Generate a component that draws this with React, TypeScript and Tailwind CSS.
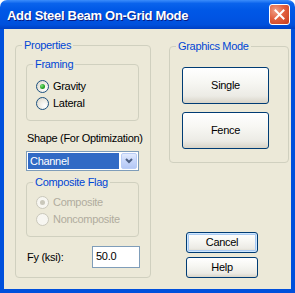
import React from 'react';

const font = "font-['Liberation_Sans',Arial,sans-serif]";

const Radio: React.FC<{ label: string; checked?: boolean; disabled?: boolean }> = ({ label, checked, disabled }) => (
  <div className="flex items-center h-[17px]">
    <span
      className={`relative w-[13px] h-[13px] rounded-full border flex items-center justify-center shrink-0 ${
        disabled
          ? 'border-[#cac8bb] bg-[#f7f6f1]'
          : 'border-[#1c5180] bg-[radial-gradient(circle_at_70%_70%,#ffffff_0%,#ece9e0_55%,#d4d2c6_100%)]'
      }`}
    >
      {checked && (
        <span
          className={`w-[5px] h-[5px] rounded-full ${
            disabled ? 'bg-[#cac8bb]' : 'bg-[radial-gradient(circle_at_35%_35%,#7ee27e_0%,#21a121_60%,#1a801a_100%)]'
          }`}
        />
      )}
    </span>
    <span className={`ml-[4px] text-[11px] leading-[13px] tracking-[-0.3px] ${disabled ? 'text-[#b0ac9e]' : 'text-black'}`}>
      {label}
    </span>
  </div>
);

const XpButton: React.FC<{ label: string; className?: string; focused?: boolean }> = ({ label, className = '', focused }) => (
  <button
    className={`rounded-[3px] border border-[#003c74] bg-[linear-gradient(180deg,#ffffff_0%,#f7f7f3_40%,#ecebe5_80%,#d8d4c8_100%)] text-[11px] tracking-[-0.3px] text-black flex items-center justify-center ${
      focused ? 'shadow-[inset_0_0_0_1px_#cee7ff,inset_0_0_0_2px_#a9caf2]' : ''
    } ${className}`}
  >
    {label}
  </button>
);

// group box: the padding sits on an inner div so the legend stays at the left
const Group: React.FC<{ title: string; className?: string; inner?: string; children: React.ReactNode }> = ({
  title,
  className = '',
  inner = '',
  children,
}) => (
  <fieldset className={`border border-[#d0d0bf] rounded-[4px] min-w-0 ${className}`}>
    <legend className="ml-[6px] px-[2px] text-[11px] leading-[13px] tracking-[-0.3px] text-[#0046d5]">{title}</legend>
    <div className={inner}>{children}</div>
  </fieldset>
);

export default function App() {
  return (
    <div className={`w-[295px] h-[293px] flex flex-col ${font} select-none`}>
      {/* title bar */}
      <div className="h-[29px] shrink-0 rounded-t-[7px] bg-[linear-gradient(180deg,#3c8dfb_0%,#0a63ec_12%,#0058e6_35%,#0054e3_60%,#0050dc_85%,#0040c4_100%)] flex items-center pl-[7px] pr-[5px]">
        <span className="flex-1 pt-[2px] text-[13px] font-bold text-white tracking-[-0.3px] [text-shadow:1px_1px_0_#0a1b80]">
          Add Steel Beam On-Grid Mode
        </span>
        <div className="w-[21px] h-[21px] rounded-[3px] border border-white bg-[radial-gradient(circle_at_30%_30%,#f0a088_0%,#e2603f_45%,#c83c1c_100%)] flex items-center justify-center">
          <svg width="11" height="11" viewBox="0 0 11 11">
            <path d="M1.5 1.5 L9.5 9.5 M9.5 1.5 L1.5 9.5" stroke="#ffffff" strokeWidth="2" strokeLinecap="square" />
          </svg>
        </div>
      </div>

      {/* body */}
      <div className="flex-1 flex bg-[#ece9d8] border-l-4 border-r-4 border-b-4 border-[#0050dc]">
        {/* left column */}
        <Group title="Properties" className="ml-[11px] mt-[10px] w-[136px] h-[239px]" inner="px-[10px]">
          <Group title="Framing" className="mt-[6px] w-[113px]" inner="pl-[9px] pt-[7px] pb-[8px]">
            <Radio label="Gravity" checked />
            <Radio label="Lateral" />
          </Group>

          <div className="mt-[11px] ml-[1px] text-[11px] leading-[13px] tracking-[-0.3px] text-black whitespace-nowrap">
            Shape (For Optimization)
          </div>

          <div className="mt-[6px] w-[113px] h-[20px] border border-[#7f9db9] bg-white flex items-center p-[1px]">
            <div className="flex-1 h-full bg-[#316ac5] text-white text-[11px] tracking-[-0.3px] leading-[16px] pl-[2px]">Channel</div>
            <div className="ml-[2px] w-[16px] h-full rounded-[2px] border border-[#b9cdf6] bg-[linear-gradient(180deg,#e2ebfe_0%,#c6d6fa_50%,#b4c8f6_100%)] flex items-center justify-center">
              <svg width="8" height="6" viewBox="0 0 8 6">
                <path d="M1 1 L4 4 L7 1" stroke="#4d6185" strokeWidth="2" fill="none" />
              </svg>
            </div>
          </div>

          <Group title="Composite Flag" className="mt-[5px] w-[113px]" inner="pl-[9px] pt-[5px] pb-[8px]">
            <Radio label="Composite" checked disabled />
            <Radio label="Noncomposite" disabled />
          </Group>

          <div className="mt-[9px] flex items-center">
            <span className="ml-[1px] flex-1 text-[11px] tracking-[-0.3px] text-black">Fy (ksi):</span>
            <div className="w-[48px] h-[22px] border border-[#7f9db9] bg-white text-[11px] tracking-[-0.3px] text-black pl-[3px] pt-[3px] leading-[13px]">
              50.0
            </div>
          </div>
        </Group>

        {/* right column */}
        <div className="ml-[18px] flex flex-col w-[120px]">
          <Group title="Graphics Mode" className="mt-[11px] w-[120px]" inner="pl-[12px] pt-[14px] pb-[13px]">
            <XpButton label="Single" className="w-[87px] h-[37px]" />
            <XpButton label="Fence" className="mt-[8px] w-[87px] h-[37px]" />
          </Group>
          <div className="mt-auto mb-[11px] ml-[17px] flex flex-col gap-[4px]">
            <XpButton label="Cancel" focused className="w-[72px] h-[21px]" />
            <XpButton label="Help" className="w-[72px] h-[21px]" />
          </div>
        </div>
      </div>
    </div>
  );
}
